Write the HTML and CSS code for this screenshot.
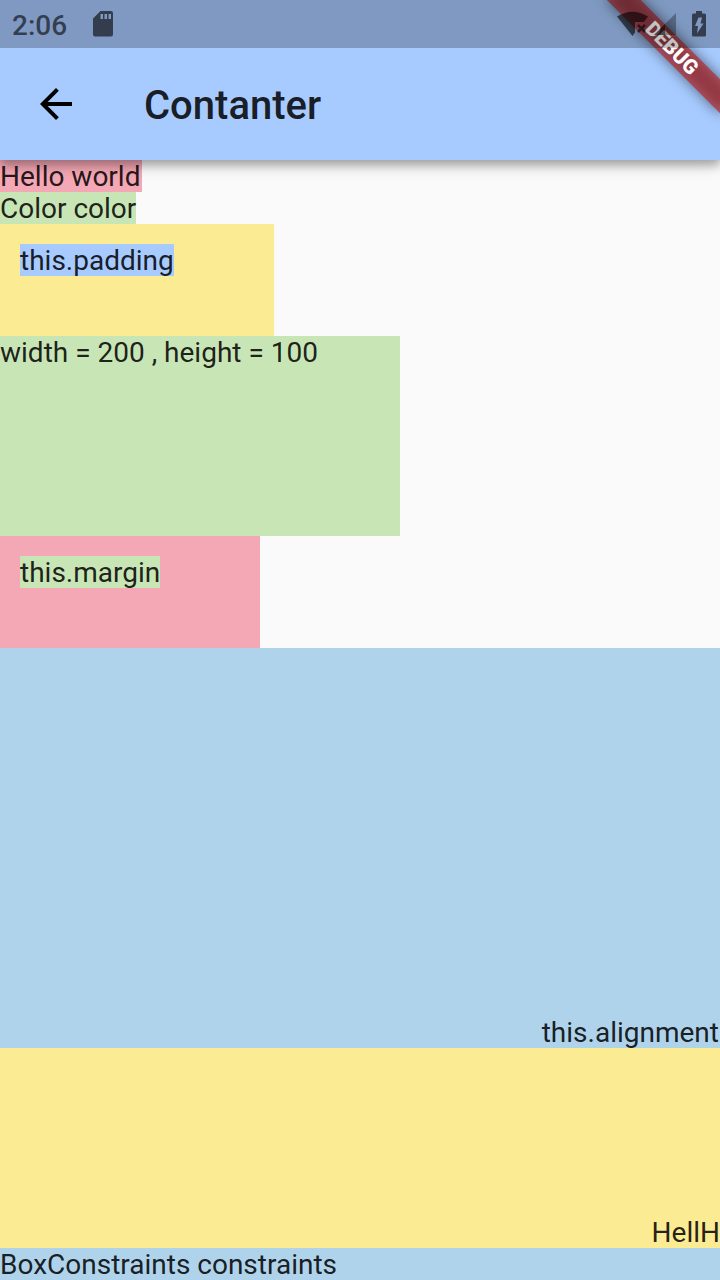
FILE: index.html
```html
<!DOCTYPE html>
<html lang="en">
<head>
<meta charset="utf-8">
<title>Contanter</title>
<link rel="stylesheet" href="styles.css">
</head>
<body>
<div class="screen">
  <header class="app-header">
    <div class="status-space"></div>
    <div class="app-bar">
      <svg class="back" viewBox="0 0 24 24"><path d="M20 11H7.83l5.59-5.59L12 4l-8 8 8 8 1.41-1.41L7.83 13H20v-2z"/></svg>
      <h1 class="title">Contanter</h1>
    </div>
  </header>
  <main class="content">
    <div class="box pink hello">Hello world</div>
    <div class="box green color">Color color</div>
    <div class="box yellow padding-demo"><span class="label blue padding-label">this.padding</span></div>
    <div class="box green sized">width = 200 , height = 100</div>
    <div class="box pink margin-demo"><span class="label green margin-label">this.margin</span></div>
    <div class="box sky align-demo"><span>this.alignment</span></div>
    <div class="box yellow end-demo"><span>HellH</span></div>
    <div class="box sky constraints">BoxConstraints constraints</div>
  </main>
  <div class="debug-corner">
    <div class="debug-banner debug-shadow"></div>
    <div class="debug-banner debug-ribbon">DEBUG</div>
  </div>
  <div class="status-bar">
    <span class="clock">2:06</span>
    <svg class="sd" width="20" height="26" viewBox="0 0 20 26"><path fill-rule="evenodd" d="M7.500 0H18a2 2 0 0 1 2 2V23.500a2 2 0 0 1-2 2H2a2 2 0 0 1-2-2V7.500ZM7.500 3V8H10V3ZM11.500 3V8H14V3ZM15.500 3V8H18V3Z"/></svg>
    <svg class="signals" width="66" height="28" viewBox="0 0 66 28">
      <path d="M0 5.500Q15.500-4 31 5.500L27 11H18V21.500L15.500 25Z"/>
      <path d="M21 14L28 21M28 14L21 21" stroke-width="2.600"/>
      <path class="dim" d="M59 2V24H37Z"/>
      <path d="M48 13V24H37Z"/>
    </svg>
    <svg class="battery" width="14" height="26" viewBox="0 0 14 26"><path fill-rule="evenodd" d="M4 0H10V2.500H12.500A1.500 1.500 0 0 1 14 4V24A1.500 1.500 0 0 1 12.500 25.500H1.500A1.500 1.500 0 0 1 0 24V4A1.500 1.500 0 0 1 1.500 2.500H4ZM6.500 6.500L3 15H6L5 22.500L11.500 12.500H8.500L10 6.500Z"/></svg>
  </div>
</div>
</body>
</html>
```
FILE: styles.css
```css
body { margin: 0; }
.screen {
  position: relative;
  width: 720px;
  height: 1280px;
  overflow: hidden;
  background: #fafafa;
  color: rgba(0, 0, 0, 0.87);
  font-family: Roboto, sans-serif;
}
.app-header {
  position: relative;
  z-index: 1;
  height: 160px;
  background: #a7caff;
  box-shadow: 0 4px 8px rgba(0, 0, 0, 0.2), 0 8px 10px rgba(0, 0, 0, 0.12), 0 2px 20px rgba(0, 0, 0, 0.12);
}
.status-space { height: 48px; }
.app-bar { display: flex; align-items: center; height: 112px; padding-left: 32px; }
.back { width: 48px; height: 48px; fill: #000; }
.title {
  margin: 4px 0 0 64px;
  font-size: 40px;
  font-weight: 500;
  line-height: 48px;
}
.content { display: flex; flex-direction: column; align-items: flex-start; }
.box { box-sizing: border-box; flex: none; font-size: 28px; line-height: 34px; white-space: nowrap; }
.label { display: block; height: 32px; }
.pink { background: #f4a7b4; }
.green { background: #c8e5b5; }
.yellow { background: #fbec94; }
.blue { background: #a7caff; }
.sky { background: #afd3eb; }
.hello { width: 142px; height: 32px; }
.color { width: 136px; height: 32px; }
.padding-demo { width: 274px; height: 112px; padding: 20px; }
.padding-label { width: 154px; }
.sized { width: 400px; height: 200px; }
.margin-demo { width: 260px; height: 112px; padding: 20px; }
.margin-label { width: 140px; }
.align-demo, .end-demo { display: flex; align-items: flex-end; justify-content: flex-end; width: 720px; }
.align-demo span, .end-demo span { height: 32px; }
.align-demo { height: 400px; padding-right: 1px; }
.end-demo { height: 200px; }
.constraints { width: 720px; height: 32px; }

.debug-corner { position: absolute; z-index: 2; top: 0; right: 0; width: 200px; height: 200px; overflow: hidden; }
.debug-banner {
  position: absolute;
  left: 120px;
  top: 56px;
  width: 160px;
  height: 24px;
  transform: rotate(45deg);
  transform-origin: 80px -56px;
}
.debug-shadow { background: rgba(0, 0, 0, 0.5); filter: blur(7px); }
.debug-ribbon {
  background: rgba(183, 28, 28, 0.627);
  color: #fff;
  font-size: 20.4px;
  font-weight: 900;
  line-height: 24px;
  text-align: center;
}
.status-bar {
  position: absolute;
  z-index: 3;
  top: 0;
  left: 0;
  display: flex;
  align-items: flex-start;
  box-sizing: border-box;
  width: 720px;
  height: 48px;
  padding: 11px 14px 0 12px;
  background: rgba(0, 0, 0, 0.24);
}
.status-bar svg { fill: rgba(0, 0, 0, 0.6); stroke: none; }
.clock { width: 81px; font-size: 28px; font-weight: 500; line-height: 29px; color: rgba(0, 0, 0, 0.6); }
.signals { margin-left: auto; }
.signals path[stroke-width] { stroke: rgba(0, 0, 0, 0.6); }
.signals .dim { fill: rgba(0, 0, 0, 0.3); }
.signals path:last-child { fill: rgba(0, 0, 0, 0.45); }
.battery { margin-left: 9px; }
```
